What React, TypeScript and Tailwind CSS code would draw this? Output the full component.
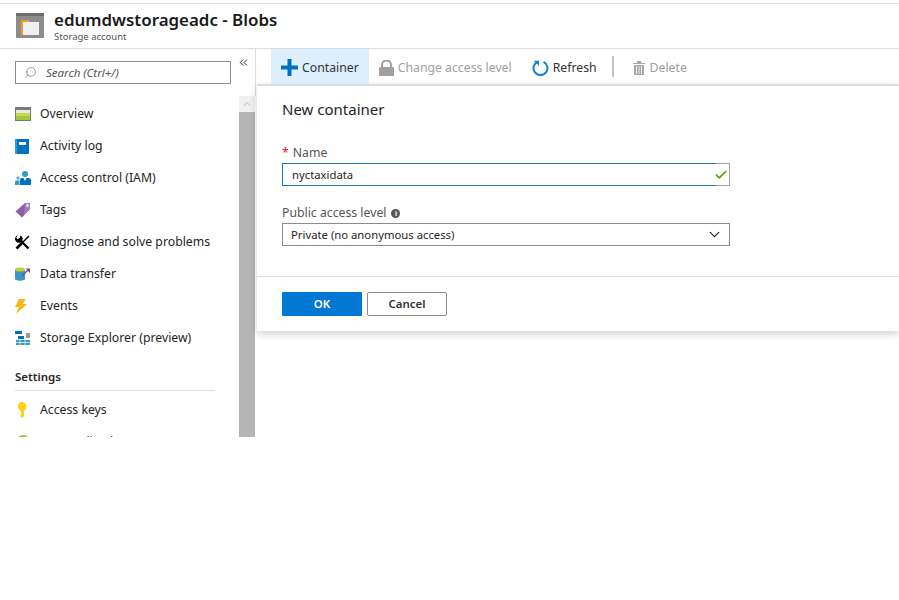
import React from 'react';
import { ChevronDown, ChevronUp, ChevronsLeft, Search, Check } from 'lucide-react';

function OverviewIcon() {
    return (
        <svg width="16" height="14" viewBox="0 0 16 14">
            <rect width="16" height="14" fill="#7a7a7a" />
            <rect x="1" y="3" width="14" height="3" fill="#e8e8e8" />
            <rect x="1" y="6" width="14" height="3" fill="#c4d94c" />
            <rect x="1" y="9" width="14" height="4" fill="#a4c639" />
        </svg>
    );
}

function ActivityIcon() {
    return (
        <svg width="14" height="15" viewBox="0 0 14 15">
            <rect width="14" height="15" rx="1" fill="#0072c6" />
            <rect width="2" height="15" fill="#3999c6" />
            <rect x="4" y="3" width="7" height="3" fill="#ffffff" />
        </svg>
    );
}

function AccessIcon() {
    return (
        <svg width="16" height="14" viewBox="0 0 16 14">
            <circle cx="10" cy="3" r="3" fill="#3999c6" />
            <path d="M5 14V8.500Q5 7 7 7h6q3 0 3 2v5z" fill="#0072c6" />
            <path d="M8.500 7h3L10 10z" fill="#ffffff" />
            <circle cx="3" cy="7" r="1.700" fill="#59b4d9" />
            <path d="M0 14V10.500Q0 9.500 1.500 9.500h3V14z" fill="#3999c6" />
        </svg>
    );
}

function TagIcon() {
    return (
        <svg width="16" height="16" viewBox="0 0 16 16">
            <path d="M10 1h5v6l-8 8.500L0.500 9.500z" fill="#8a5fa8" />
            <path d="M10 1h5v6L9 13z" fill="#a77dc2" />
            <circle cx="12.500" cy="3.500" r="1.200" fill="#ffffff" />
        </svg>
    );
}

function ToolsIcon() {
    return (
        <svg width="15" height="15" viewBox="0 0 15 15">
            <path d="M6 6l7.500 7.500" stroke="#000000" strokeWidth="2.400" />
            <path d="M2.800 0.300L1.200 2.700l1.500 1.500 2.300-1.500L5.500 0.600a3.800 3.800 0 0 1 1.800 5.200L5.800 7.300a3.800 3.800 0 0 1-5.400-1.700A3.800 3.800 0 0 1 2.800 0.300z" fill="#000000" />
            <path d="M14 1L8 7" stroke="#000000" strokeWidth="1.400" />
            <path d="M7 8l-5.500 5.500" stroke="#000000" strokeWidth="2.600" />
        </svg>
    );
}

function TransferIcon() {
    return (
        <svg width="15" height="15" viewBox="0 0 15 15">
            <path d="M0 2v10.500Q5 15 10 12.500V2z" fill="#3999c6" />
            <ellipse cx="5" cy="2.500" rx="5" ry="2" fill="#b8d432" />
            <path d="M7 9l6-6" stroke="#804998" strokeWidth="1.500" />
            <path d="M10.500 1.500H15V6z" fill="#804998" />
        </svg>
    );
}

function BoltIcon() {
    return (
        <svg width="12" height="15" viewBox="0 0 12 15">
            <path d="M4 0h7L7.500 5H12L1 15l3-7H0z" fill="#fcb714" />
        </svg>
    );
}

function ExplorerIcon() {
    return (
        <svg width="16" height="15" viewBox="0 0 16 15">
            <rect x="0" y="0" width="7" height="3" fill="#0072c6" />
            <rect x="3" y="5" width="6" height="3" fill="#0072c6" />
            <rect x="11" y="2" width="4" height="5" fill="#9a9a9a" />
            <rect x="1" y="9" width="14" height="5" fill="#3999c6" />
            <path d="M1 11.500h14M5 9v5M10 9v5" stroke="#ffffff" strokeWidth="0.700" />
        </svg>
    );
}

function KeyIcon() {
    return (
        <svg width="10" height="16" viewBox="0 0 10 16" className="ml-[2px]">
            <path d="M5 0a4.500 4.500 0 0 1 2 8.500V14l-2 2-1.500-1.500V13l1-1-1-1 1-1-1-1V8.500A4.500 4.500 0 0 1 5 0z" fill="#fcd116" />
        </svg>
    );
}

function GlobeIcon() {
    return (
        <svg width="14" height="16" viewBox="0 0 14 16" className="ml-px">
            <circle cx="7" cy="8" r="7" fill="#a4c639" />
            <path d="M3 4h7l2 2H4z" fill="#59b4d9" />
            <path d="M9 1.500l2 0 3 4-2 0z" fill="#fcd116" />
        </svg>
    );
}

const navItems = [
    { label: 'Overview', icon: <OverviewIcon /> },
    { label: 'Activity log', icon: <ActivityIcon /> },
    { label: 'Access control (IAM)', icon: <AccessIcon /> },
    { label: 'Tags', icon: <TagIcon /> },
    { label: 'Diagnose and solve problems', icon: <ToolsIcon /> },
    { label: 'Data transfer', icon: <TransferIcon /> },
    { label: 'Events', icon: <BoltIcon /> },
    { label: 'Storage Explorer (preview)', icon: <ExplorerIcon /> },
];

function NavRow({ label, icon }: { label: string; icon: React.ReactNode }) {
    return (
        <div className="flex h-8 items-center pl-[15px] text-[12.250px] text-[#252525]">
            <div className="flex w-[25px] shrink-0 items-center">{icon}</div>
            <span className="whitespace-nowrap">{label}</span>
        </div>
    );
}

function Sidebar() {
    return (
        <aside className="flex h-[388px] w-[256px] shrink-0 overflow-hidden">
            <div className="w-[239px] shrink-0 overflow-hidden">
                <div className="mb-[14px] ml-[15px] mt-[12px] flex h-[23px] w-[216px] items-center border border-[#8c8c8c] pl-2">
                    <Search className="h-[13px] w-[13px] -scale-x-100 text-[#666666]" strokeWidth={1.200} />
                    <span className="ml-[9px] text-[11.500px] italic text-[#555555]">Search (Ctrl+/)</span>
                </div>
                {navItems.map((item) => (
                    <NavRow key={item.label} label={item.label} icon={item.icon} />
                ))}
                <div className="ml-[15px] mr-[24px] mt-[14px] border-b border-[#dddddd] pb-[5px] text-[11.500px] font-semibold text-[#252525]">
                    Settings
                </div>
                <div className="mt-[3px]">
                    <NavRow label="Access keys" icon={<KeyIcon />} />
                    <NavRow label="Geo-replication" icon={<GlobeIcon />} />
                </div>
            </div>
            <div className="flex w-[17px] shrink-0 flex-col">
                <div className="h-[47px] border-r border-[#dddddd]">
                    <ChevronsLeft className="ml-[-2px] mt-[7px] h-[13px] w-[13px] text-[#252525]" strokeWidth={1.800} />
                </div>
                <div className="flex h-[16px] w-[16px] items-center justify-center bg-[#f0f0f0]">
                    <ChevronUp className="h-[12px] w-[12px] text-[#a6a6a6]" strokeWidth={1.500} />
                </div>
                <div className="w-[16px] flex-1 bg-[#b5b5b5]" />
            </div>
        </aside>
    );
}

function ToolButton({ icon, label, disabled }: { icon: React.ReactNode; label: string; disabled?: boolean }) {
    return (
        <div className={`flex h-full items-center px-[10px] pt-[2px] text-[12.250px] ${disabled ? 'text-[#a0a0a0]' : 'text-[#333333]'}`}>
            <div className="mr-[4px] flex items-center">{icon}</div>
            <span className="whitespace-nowrap pt-[2px]">{label}</span>
        </div>
    );
}

function Toolbar() {
    return (
        <div className="flex h-[35px] items-center pl-[15px]">
            <div className="flex h-full items-center bg-[#ddeefc] pl-[10px] pr-[10px] pt-[2px] text-[12.250px] text-[#333333]">
                <svg width="17" height="17" viewBox="0 0 17 17" className="mr-[4px]">
                    <path d="M6.500 0h4v6.500H17v4h-6.500V17h-4v-6.500H0v-4h6.500z" fill="#0072c6" />
                </svg>
                <span className="pt-[2px]">Container</span>
            </div>
            <ToolButton
                disabled
                label="Change access level"
                icon={
                    <svg width="15" height="16" viewBox="0 0 15 16">
                        <path d="M3 7V5a4.500 4.500 0 0 1 9 0v2" fill="none" stroke="#a0a0a0" strokeWidth="2" />
                        <rect y="7" width="15" height="9" rx="1" fill="#a0a0a0" />
                    </svg>
                }
            />
            <ToolButton
                label="Refresh"
                icon={
                    <svg width="17" height="17" viewBox="0 0 17 17">
                        <path d="M5.500 2.800a7 7 0 1 0 6 0" fill="none" stroke="#0f82d8" strokeWidth="2" />
                        <path d="M1.800 1.800h5.200v5z" fill="#0f82d8" />
                    </svg>
                }
            />
            <div className="ml-[5px] h-[21px] w-[2px] bg-[#c4c4c4]" />
            <div className="ml-[9px] h-full">
                <ToolButton
                    disabled
                    label="Delete"
                    icon={
                        <svg width="12" height="14" viewBox="0 0 12 14" className="mr-[1px]">
                            <path d="M0 2h12v1H0zM4 0h4v2H4zM1 4h10v10H1z" fill="#a8a8a8" />
                            <path d="M3.500 5v8M6 5v8M8.500 5v8" stroke="#ffffff" strokeWidth="0.800" />
                        </svg>
                    }
                />
            </div>
        </div>
    );
}

function ContainerPanel() {
    return (
        <div className="ml-px border-t-2 border-[#dddddd] bg-white shadow-[0_3px_8px_rgba(0,0,0,0.18)]">
            <div className="px-[25px] pt-[13px]">
                <h2 className="text-[15px] font-normal leading-[20px] text-[#252525]">New container</h2>
                <div className="mt-[25px] flex h-[18px] items-center text-[12.250px] text-[#555555]">
                    <span className="mr-[4px] text-[#e81123]">*</span>
                    <span>Name</span>
                </div>
                <div className="mt-[1px] flex h-[23px] w-[448px]">
                    <div className="flex flex-1 items-center border border-r-0 border-[#1b78c0] pl-[9px] pt-[2px] text-[11.300px] text-[#252525]">
                        nyctaxidata
                    </div>
                    <div className="flex w-[14px] items-center justify-center border border-l-0 border-[#a0a0a0]">
                        <Check className="ml-[-3px] h-[14px] w-[14px] shrink-0 text-[#57a300]" strokeWidth={3} />
                    </div>
                </div>
                <div className="mt-[18px] flex h-[18px] items-center text-[12.250px] text-[#555555]">
                    <span>Public access level</span>
                    <span className="ml-[5px] flex h-[9px] w-[9px] items-center justify-center rounded-full bg-[#555555] text-[7px] font-bold leading-none text-white">i</span>
                </div>
                <div className="mt-[1px] flex h-[23px] w-[448px] items-center justify-between border border-[#8c8c8c] pl-[8px] pr-[6px] text-[11.300px] text-[#252525]">
                    <span className="pt-[2px]">Private (no anonymous access)</span>
                    <ChevronDown className="h-[17px] w-[17px] text-[#252525]" strokeWidth={1.700} />
                </div>
            </div>
            <div className="mt-[30px] flex gap-[5px] border-t border-[#dddddd] px-[25px] pb-[15px] pt-[15px]">
                <button className="h-[24px] w-[80px] rounded-[1px] bg-[#0078d4] text-[11.500px] font-semibold text-white">OK</button>
                <button className="h-[24px] w-[80px] rounded-[2px] border border-[#8c8c8c] bg-white text-[11.500px] font-semibold text-[#333333]">Cancel</button>
            </div>
        </div>
    );
}

export default function App() {
    return (
        <div className="h-[600px] w-[899px] overflow-hidden bg-white pt-[3px] font-['Noto_Sans','Open_Sans',sans-serif]">
            <header className="flex h-[46px] items-center border-y border-[#dddddd] pl-[16px]">
                <svg width="28" height="25" viewBox="0 0 28 25" className="mt-[-2px]">
                    <rect width="28" height="25" fill="#8c8c8c" />
                    <rect width="28" height="3" fill="#6e6e6e" />
                    <path d="M5 7h7l1 2h10v13H5z" fill="#f0f0f0" />
                    <rect x="5" y="7" width="2" height="15" fill="#f59a23" />
                    <rect x="5" y="7" width="7" height="2" fill="#f59a23" />
                </svg>
                <div className="ml-[10px]">
                    <div className="text-[16.900px] font-semibold leading-[22px] text-[#1a1a1a]">edumdwstorageadc - Blobs</div>
                    <div className="text-[9.500px] leading-[12px] text-[#555555]">Storage account</div>
                </div>
            </header>
            <div className="flex">
                <Sidebar />
                <main className="flex-1">
                    <Toolbar />
                    <ContainerPanel />
                </main>
            </div>
        </div>
    );
}
